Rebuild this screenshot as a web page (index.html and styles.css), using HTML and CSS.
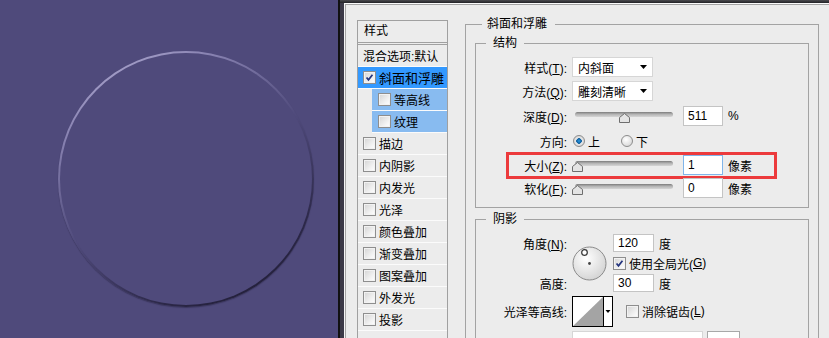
FILE: index.html
```html
<!DOCTYPE html>
<html lang="zh-CN">
<head>
  <meta charset="UTF-8">
  <title>图层样式 - 斜面和浮雕</title>
  <link rel="stylesheet" href="styles.css">
</head>
<body>

<!-- Canvas with the bevelled circle -->
<div class="canvas">
  <div class="ring"><div class="ring-inner"></div></div>
</div>

<div class="window">
  <div class="gutter"></div>
  <div class="dialog">

    <!-- Style list -->
    <div class="style-list">
      <div class="list-head">样式</div>
      <div class="list-item">混合选项:默认</div>
      <div class="list-item selected">
        <span class="check"><svg viewBox="0 0 13 13"><path d="M3 6.5 L5.3 9.3 L10 3.2" /></svg></span>斜面和浮雕
      </div>
      <div class="list-item sub"><span class="check"></span>等高线</div>
      <div class="list-item sub"><span class="check"></span>纹理</div>
      <div class="list-item"><span class="check"></span>描边</div>
      <div class="list-item"><span class="check"></span>内阴影</div>
      <div class="list-item"><span class="check"></span>内发光</div>
      <div class="list-item"><span class="check"></span>光泽</div>
      <div class="list-item"><span class="check"></span>颜色叠加</div>
      <div class="list-item"><span class="check"></span>渐变叠加</div>
      <div class="list-item"><span class="check"></span>图案叠加</div>
      <div class="list-item"><span class="check"></span>外发光</div>
      <div class="list-item"><span class="check"></span>投影</div>
      <div class="list-item"></div>
    </div>

    <!-- Settings -->
    <fieldset class="group outer">
      <legend>斜面和浮雕</legend>

      <fieldset class="group">
        <legend>结构</legend>

        <div class="row">
          <span class="label">样式(<u>T</u>):</span>
          <div class="select">内斜面<svg class="arrow" viewBox="0 0 7 4"><path d="M0 0 H7 L3.5 4 Z" /></svg></div>
        </div>
        <div class="row">
          <span class="label">方法(<u>Q</u>):</span>
          <div class="select">雕刻清晰<svg class="arrow" viewBox="0 0 7 4"><path d="M0 0 H7 L3.5 4 Z" /></svg></div>
        </div>
        <div class="row tall">
          <span class="label">深度(<u>D</u>):</span>
          <div class="slider"><div class="track"></div><svg class="thumb" style="left:44px" viewBox="0 0 11 10"><path d="M0.5 4.5 L5.5 0.5 L10.5 4.5 V9.5 H0.5 Z" /></svg></div>
          <div class="field">511</div>
          <span class="unit">%</span>
        </div>
        <div class="row">
          <span class="label">方向:</span>
          <span class="radio on"></span><span class="radio-text">上</span>
          <span class="radio"></span><span class="radio-text">下</span>
        </div>
        <div class="row marked">
          <span class="label">大小(<u>Z</u>):</span>
          <div class="slider"><div class="track"></div><svg class="thumb" style="left:-3px" viewBox="0 0 11 10"><path d="M0.5 4.5 L5.5 0.5 L10.5 4.5 V9.5 H0.5 Z" /></svg></div>
          <div class="field focus">1</div>
          <span class="unit">像素</span>
          <div class="highlight"></div>
        </div>
        <div class="row short">
          <span class="label">软化(<u>F</u>):</span>
          <div class="slider"><div class="track"></div><svg class="thumb" style="left:-3px" viewBox="0 0 11 10"><path d="M0.5 4.5 L5.5 0.5 L10.5 4.5 V9.5 H0.5 Z" /></svg></div>
          <div class="field">0</div>
          <span class="unit">像素</span>
        </div>
      </fieldset>

      <fieldset class="group shade">
        <legend>阴影</legend>

        <div class="shade-grid">
          <span class="label angle-label">角度(<u>N</u>):</span>
          <svg class="dial" viewBox="0 0 35 35">
            <defs>
              <radialGradient id="dialFill" cx="0.4" cy="0.35" r="0.7">
                <stop offset="0" stop-color="#ffffff" />
                <stop offset="1" stop-color="#d2d2d2" />
              </radialGradient>
            </defs>
            <circle cx="17.5" cy="17.5" r="16.5" fill="url(#dialFill)" stroke="#8a8a8a" />
            <circle cx="12.5" cy="6.5" r="2.8" fill="#fff" stroke="#333" stroke-width="1.2" />
            <circle cx="17.5" cy="17.5" r="1.4" fill="#444" />
          </svg>
          <div class="cell angle-value">
            <div class="field small">120</div><span class="unit">度</span>
          </div>

          <div class="cell global-light">
            <span class="check"><svg viewBox="0 0 13 13"><path d="M3 6.5 L5.3 9.3 L10 3.2" /></svg></span>使用全局光(<u>G</u>)
          </div>

          <span class="label altitude-label">高度:</span>
          <div class="cell altitude-value">
            <div class="field small">30</div><span class="unit">度</span>
          </div>

          <span class="label contour-label">光泽等高线:</span>
          <svg class="contour" viewBox="0 0 41 31">
            <rect x="0.5" y="0.5" width="40" height="30" fill="#fff" stroke="#000" />
            <path d="M1 30 L31 1 V30 Z" fill="#a4a4a4" />
            <path d="M31.5 1 V30" stroke="#000" />
            <path d="M33.5 14 H38.5 L36 17 Z" fill="#000" />
          </svg>
          <div class="cell antialias">
            <span class="check"></span>消除锯齿(<u>L</u>)
          </div>

          <span class="label mode-label">高光模式:</span>
          <div class="cell mode-value">
            <div class="select long">滤色</div>
            <div class="swatch"></div>
          </div>
        </div>
      </fieldset>
    </fieldset>

  </div>
</div>

</body>
</html>
```

FILE: styles.css
```css
body {
  margin: 0;
  padding: 0;
  display: flex;
  height: 338px;
  overflow: hidden;
  background-color: #ececec;
  font-family: 'Liberation Sans', 'Noto Sans CJK SC', sans-serif;
  font-size: 12px;
  color: #000;
}

/* Canvas */
.canvas {
  flex: none;
  width: 338px;
  height: 338px;
  box-sizing: border-box;
  padding: 51px 0 0 58px;
  background-color: #4f4a7b;
}

.ring {
  width: 256px;
  height: 256px;
  box-sizing: border-box;
  padding: 2px;
  border-radius: 50%;
  background: linear-gradient(150deg, #c2bde0 0%, #8983b2 22%, #4f4a7b 50%, #2c2848 78%, #1a172c 100%);
  box-shadow: 0 1px 1px rgba(20, 18, 36, 0.35);
}

.ring-inner {
  width: 100%;
  height: 100%;
  border-radius: 50%;
  background-color: #4f4a7b;
}

/* Dialog frame */
.window {
  flex: 1;
  display: flex;
  padding-top: 3px;
  border-left: 2px solid #111;
  background: linear-gradient(#4a4a4e, #222226 3px);
}

.gutter {
  flex: none;
  width: 4px;
  background-color: #3c3a48;
}

.dialog {
  flex: 1;
  display: flex;
  align-items: flex-start;
  padding-left: 12px;
  background-color: #ececec;
  border-top: 1px solid #fbfbfb;
  border-left: 1px solid #f6f6f6;
  box-shadow: inset 1px 1px 0 #a4a4a4;
}

/* Style list */
.style-list {
  flex: none;
  width: 91px;
  height: 330px;
  margin-top: 16px;
  box-sizing: border-box;
  border: 1px solid #a0a0a0;
}

.list-head {
  height: 21px;
  line-height: 21px;
  padding-left: 6px;
  border-bottom: 3px double #a0a0a0;
}

.list-item {
  display: flex;
  align-items: center;
  height: 21px;
  padding-left: 5px;
  border-bottom: 1px solid #fbfbfb;
  white-space: nowrap;
}

.list-item.selected {
  background-color: #3399ff;
  font-size: 13px;
}

.list-item.sub {
  margin-left: 14px;
  padding-left: 6px;
  background-color: #88bbf0;
}

.check {
  flex: none;
  width: 13px;
  height: 13px;
  margin-right: 3px;
  box-sizing: border-box;
  border: 1px solid #8e8e8e;
  background: linear-gradient(135deg, #d4d4d4, #f4f4f4 70%, #ffffff);
  box-shadow: inset 0 0 0 1px #f2f2f2;
}

.check svg {
  display: block;
  width: 11px;
  height: 11px;
}

.check path {
  fill: none;
  stroke: #23347e;
  stroke-width: 2;
}

/* Group boxes */
.group {
  margin: 3px 0 0;
  padding: 4px 0 8px;
  border: 1px solid #a3a3a3;
  min-width: 0;
}

.group legend {
  margin-left: 10px;
  padding: 0 7px;
  line-height: 16px;
}

.group.outer {
  flex: none;
  width: 354px;
  height: 330px;
  box-sizing: border-box;
  margin: 12px 0 0 17px;
  padding: 0 9px;
}

.group.outer > legend {
  margin-left: 7px;
  padding: 0 8px 0 5px;
}

.group.shade {
  padding: 6px 0 0;
  height: 200px;
}

/* Rows */
.row {
  position: relative;
  display: flex;
  align-items: center;
  height: 24px;
  white-space: nowrap;
}

.row.tall {
  height: 26px;
}

.row.short {
  height: 22px;
}

.label {
  flex: none;
  width: 96px;
  box-sizing: border-box;
  padding-right: 5px;
  text-align: right;
  white-space: nowrap;
}

.select {
  display: flex;
  align-items: center;
  justify-content: space-between;
  width: 81px;
  height: 20px;
  box-sizing: border-box;
  padding: 0 5px;
  background-color: #fff;
  border: 1px solid #d6d6d6;
}

.arrow {
  width: 7px;
  height: 4px;
}

.slider {
  position: relative;
  flex: none;
  width: 98px;
  height: 11px;
  margin: 3px 0 0 3px;
}

.track {
  height: 5px;
  border-radius: 3px;
  background: linear-gradient(#7c7c7c, #b4b4b4 45%, #d6d6d6);
}

.thumb {
  position: absolute;
  top: 1px;
  width: 11px;
  height: 10px;
}

.thumb path {
  fill: #e4e4e4;
  stroke: #6e6e6e;
}

.field {
  width: 40px;
  height: 20px;
  box-sizing: border-box;
  margin-left: 10px;
  padding-left: 4px;
  line-height: 18px;
  background-color: #fff;
  border: 1px solid #c4c4c4;
}

.field.focus {
  border-color: #80b5ea;
}

.field.small {
  width: 41px;
  height: 18px;
  line-height: 16px;
  margin-left: 0;
}

.unit {
  margin-left: 5px;
}

.radio {
  flex: none;
  width: 12px;
  height: 12px;
  margin-left: 1px;
  box-sizing: border-box;
  border: 1px solid #8c8c8c;
  border-radius: 50%;
  background: radial-gradient(circle at 40% 35%, #ffffff, #cfcfcf);
}

.radio.on {
  background: radial-gradient(circle, #2d9be4 0, #0b5c9c 2.5px, #e8e8e8 3px, #c8c8c8 100%);
}

.radio-text {
  margin: 0 20px 0 3px;
}

.highlight {
  position: absolute;
  left: 30px;
  top: -1px;
  width: 271px;
  height: 27px;
  box-sizing: border-box;
  border: 3px solid #ec3a3c;
}

/* Shadow grid */
.shade-grid {
  display: grid;
  grid-template-columns: 96px 41px 1fr;
  grid-template-rows: 20px 20px 20px 36px 24px;
  grid-template-areas:
    "angle   dial    angval"
    ".       dial    global"
    "alt     dial    altval"
    "contlbl contour anti"
    "mode    modeval modeval";
  align-items: center;
  white-space: nowrap;
}

.angle-label { grid-area: angle; }
.angle-value { grid-area: angval; }
.global-light { grid-area: global; }
.altitude-label { grid-area: alt; }
.altitude-value { grid-area: altval; }
.contour-label { grid-area: contlbl; }
.antialias { grid-area: anti; margin-left: 13px; }

.cell {
  display: flex;
  align-items: center;
}

.mode-label {
  grid-area: mode;
  align-self: start;
  padding-top: 6px;
}

.mode-value {
  grid-area: modeval;
  align-self: start;
  margin-top: 2px;
}

.dial {
  grid-area: dial;
  width: 35px;
  height: 35px;
}

.contour {
  grid-area: contour;
  width: 41px;
  height: 31px;
}

.select.long {
  width: 131px;
  height: 24px;
  justify-content: flex-start;
  padding: 4px 0 0 10px;
  align-items: flex-start;
}

.swatch {
  width: 33px;
  height: 24px;
  margin-left: 4px;
  box-sizing: border-box;
  background-color: #fff;
  border: 1px solid #a8a8a8;
}
```
